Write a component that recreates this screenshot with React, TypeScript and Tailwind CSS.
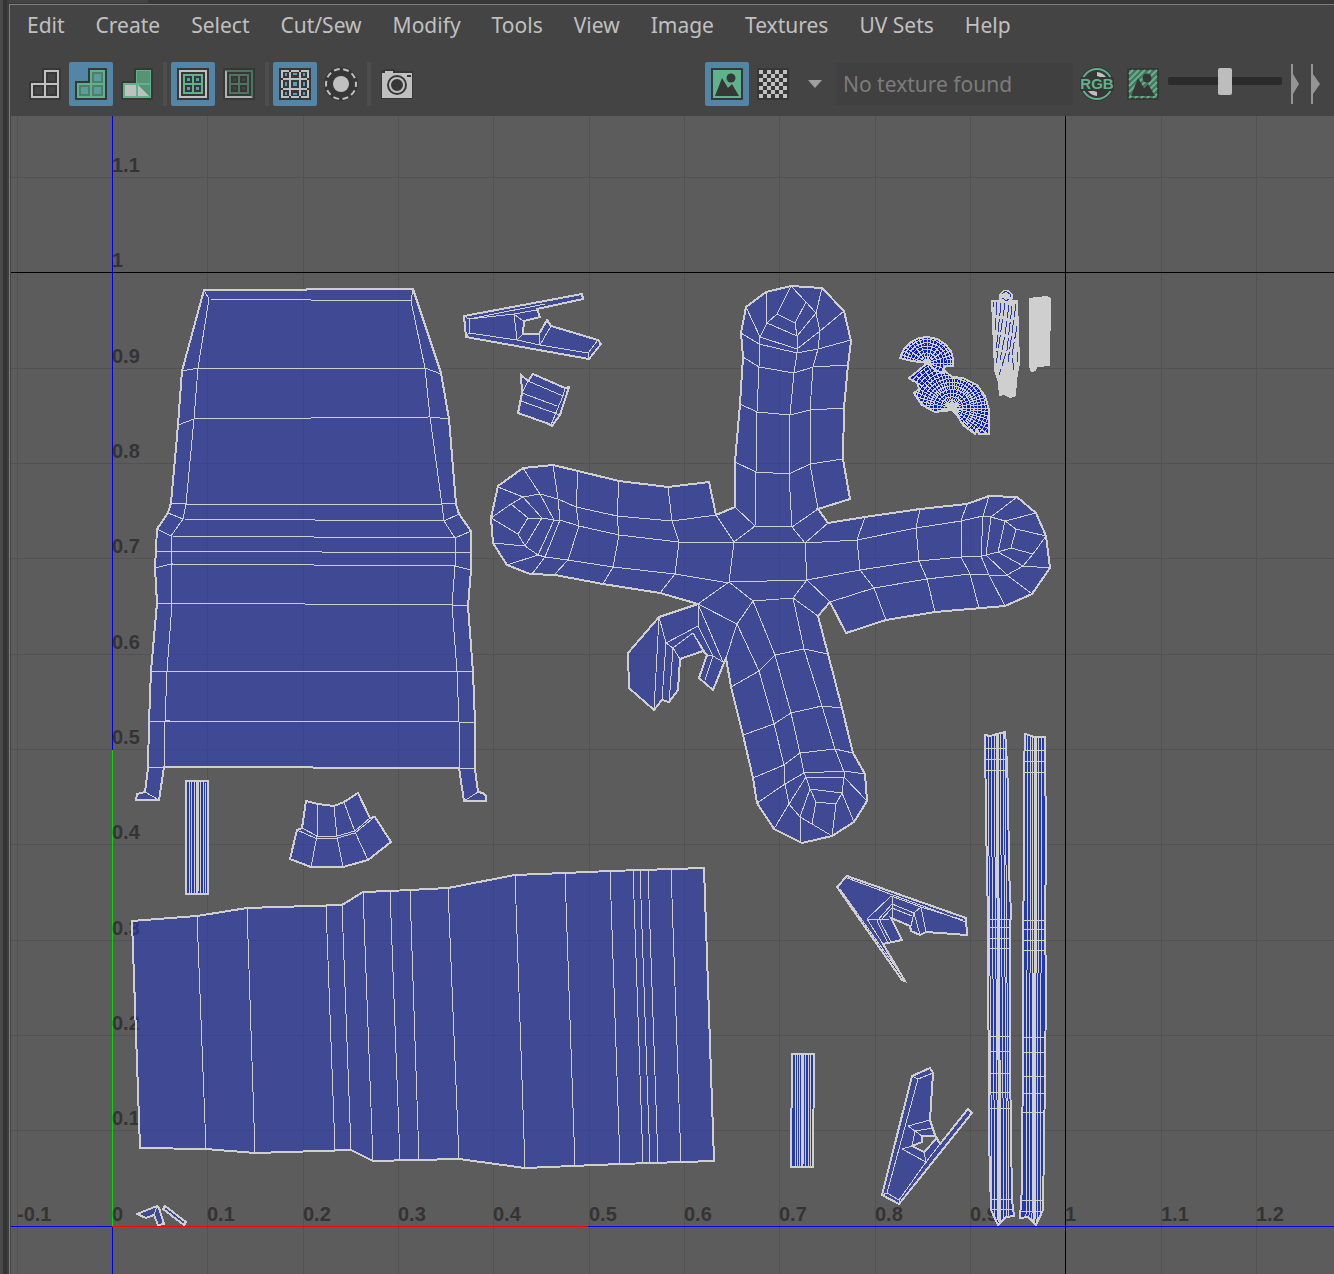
import type { ReactNode } from "react";

const menus = ["Edit", "Create", "Select", "Cut/Sew", "Modify", "Tools", "View", "Image", "Textures", "UV Sets", "Help"];

/* ---------- toolbar ---------- */

function ToolButton({ label, active, children }: { label: string; active?: boolean; children: ReactNode }) {
  return (
    <button
      type="button"
      aria-label={label}
      aria-pressed={!!active}
      className={`flex size-11 shrink-0 items-center justify-center rounded-xs ${active ? "bg-[#5285a6]" : "bg-transparent"}`}
    >
      <svg width="32" height="32" viewBox="0 0 32 32" aria-hidden="true" className="overflow-visible">
        {children}
      </svg>
    </button>
  );
}

function Separator() {
  return <div className="mx-0.5 h-11 w-1 shrink-0 bg-[#4d4d4d]" />;
}

function TilesIcon({ stroke, gap, core }: { stroke: string; gap: string; core: string }) {
  return (
    <>
      <path d="M13 0H32V32H0V13H13Z" fill="#373737" />
      <path d="M15 2H30V30H2V15H15Z" fill={stroke} />
      <path d="M17 4H28V15H17ZM4 17H15V28H4ZM17 17H28V28H17Z" fill={gap} />
      <path d="M19 6H26V13H19ZM6 19H13V26H6ZM19 19H26V26H19Z" fill={core} />
    </>
  );
}

function PictureShape() {
  return (
    <>
      <circle cx="20" cy="10" r="4.5" fill="#373737" />
      <path d="M4 28L11 10L17 20L21 16L28 28Z" fill="#373737" />
    </>
  );
}

function Checker() {
  const cells: ReactNode[] = [];
  for (let r = 0; r < 7; r++)
    for (let c = 0; c < 7; c++)
      if ((r + c) % 2 === 0) cells.push(<rect key={`${r}-${c}`} x={2 + c * 4} y={2 + r * 4} width="4" height="4" fill="#c0c0c0" />);
  return (
    <>
      <rect width="32" height="32" fill="#373737" />
      {cells}
    </>
  );
}

function Toolbar() {
  return (
    <div className="flex items-center gap-0.5 overflow-hidden pt-[15px] pb-2.5 pl-3">
      <ToolButton label="Wireframe">
        <TilesIcon stroke="#c0c0c0" gap="#373737" core="#444444" />
      </ToolButton>
      <ToolButton label="Shaded" active>
        <TilesIcon stroke="#5fb38c" gap="#4f7f69" core="#5d9c9c" />
      </ToolButton>
      <ToolButton label="Distortion">
        <path d="M13 0H32V32H0V13H13Z" fill="#373737" />
        <path d="M15 2H30V30H2V15H15Z" fill="#5fb38c" />
        <path d="M16 3H29V15H16ZM17 17H29V29Z" fill="#569475" />
        <path d="M4 17H15V28H4ZM17 17L28 28H17Z" fill="#c0c0c0" />
      </ToolButton>
      <Separator />
      <ToolButton label="Texture borders" active>
        <rect width="32" height="32" fill="#373737" />
        <rect x="3" y="3" width="26" height="26" fill="none" stroke="#c0c0c0" strokeWidth="2" />
        <path d="M6 6H26V26H6Z" fill="#5fb38c" />
        <path d="M8 8H15V15H8ZM17 8H24V15H17ZM8 17H15V24H8ZM17 17H24V24H17Z" fill="#373737" />
        <path d="M10 10H13V13H10ZM19 10H22V13H19ZM10 19H13V22H10ZM19 19H22V22H19Z" fill="#5a9bc2" />
      </ToolButton>
      <ToolButton label="Grid">
        <rect width="32" height="32" fill="#373737" />
        <path d="M3 3H29V29" fill="none" stroke="#4c7662" strokeWidth="2" />
        <path d="M2 2L4 4V28H28L30 30H2Z" fill="#b0b0b0" />
        <path d="M6 6H26V26H6Z" fill="#4c7662" />
        <path d="M8 8H15V15H8ZM17 8H24V15H17ZM8 17H15V24H8ZM17 17H24V24H17Z" fill="#373737" />
        <path d="M10 10H13V13H10ZM19 10H22V13H19ZM10 19H13V22H10ZM19 19H22V22H19Z" fill="#444444" />
      </ToolButton>
      <Separator />
      <ToolButton label="Pixel snap" active>
        <rect width="32" height="32" fill="#373737" />
        <path d="M2 3H10M12 3H20M22 3H30M2 29H10M12 29H20M22 29H30M3 2V10M3 12V20M3 22V30M29 2V10M29 12V20M29 22V30" stroke="#c0c0c0" strokeWidth="2" />
        <path d="M11 4V28M21 4V28M4 11H28M4 21H28" stroke="#c0c0c0" strokeWidth="2" />
        <path d="M6 5H8V8H6ZM14 5H18V7H14ZM24 5H26V8H24ZM6 14H8V18H6ZM14 14H18V18H14ZM24 14H26V18H24ZM6 24H8V27H6ZM14 25H18V27H14ZM24 24H26V27H24Z" fill="#5a9bc2" />
      </ToolButton>
      <ToolButton label="Isolate select">
        <circle cx="16" cy="16" r="17" fill="#373737" />
        <circle cx="16" cy="16" r="15" fill="none" stroke="#c0c0c0" strokeWidth="2" strokeDasharray="5.85 3.57" strokeDashoffset="2.9" />
        <circle cx="16" cy="16" r="8" fill="#c0c0c0" />
      </ToolButton>
      <Separator />
      <ToolButton label="UV snapshot">
        <path d="M0 2H3V1H14V3H32V31H0Z" fill="#373737" />
        <path d="M1 5H4V3H12V5H31V30H1Z" fill="#c0c0c0" />
        <circle cx="16" cy="17" r="10" fill="#373737" />
        <circle cx="16" cy="17" r="7" fill="none" stroke="#c0c0c0" strokeWidth="2" />
        <rect x="26" y="7" width="4" height="2" fill="#373737" />
      </ToolButton>

      <div className="ml-auto flex items-center gap-0.5">
        <ToolButton label="Display image" active>
          <rect width="32" height="32" fill="#373737" />
          <rect x="2" y="2" width="28" height="28" fill="#5fb38c" />
          <PictureShape />
        </ToolButton>
        <ToolButton label="Checker map">
          <Checker />
        </ToolButton>
        <button type="button" aria-label="Texture list" className="flex h-11 w-9 items-center justify-center">
          <svg width="14" height="8" viewBox="0 0 14 8" aria-hidden="true">
            <path d="M0 0H14L7 8Z" fill="#a0a0a0" />
          </svg>
        </button>
        <input
          aria-label="Texture"
          readOnly
          value="No texture found"
          className="h-[42px] w-[238px] rounded-xs bg-[#404040] px-2 text-[21px] text-[#7c7c7c] outline-none"
        />
        <ToolButton label="RGB channels">
          <circle cx="16" cy="16" r="17" fill="#373737" />
          <circle cx="16" cy="16" r="15" fill="none" stroke="#5fb38c" strokeWidth="2" />
          <path d="M16 4A12 12 0 0 1 25 9H19L16 8ZM16 28A12 12 0 0 1 7 23H13L16 24Z" fill="#c0c0c0" />
          <rect x="-1" y="9" width="34" height="14" fill="#373737" />
          <text x="16" y="21" textAnchor="middle" fontFamily="Liberation Sans, Arial, sans-serif" fontWeight="700" fontSize="15" fill="#5fb38c">
            RGB
          </text>
        </ToolButton>
        <ToolButton label="Dim image">
          <rect width="32" height="32" fill="#373737" />
          <rect x="2" y="2" width="28" height="28" fill="#47735f" />
          <path
            d="M2 6L6 2M2 12L12 2M2 18L18 2M2 24L24 2M2 30L30 2M8 30L30 8M14 30L30 14M20 30L30 20M26 30L30 26"
            stroke="#5fb38c"
            strokeWidth="2"
          />
          <PictureShape />
        </ToolButton>
        <input
          type="range"
          aria-label="Image dim"
          defaultValue={50}
          className="mb-1.5 ml-px w-[114px] appearance-none bg-transparent [&::-webkit-slider-runnable-track]:h-2 [&::-webkit-slider-runnable-track]:rounded-xs [&::-webkit-slider-runnable-track]:bg-[#2b2b2b] [&::-webkit-slider-thumb]:-mt-[9px] [&::-webkit-slider-thumb]:h-[27px] [&::-webkit-slider-thumb]:w-[14px] [&::-webkit-slider-thumb]:appearance-none [&::-webkit-slider-thumb]:rounded-xs [&::-webkit-slider-thumb]:bg-[#bdbdbd]"
        />
        <button type="button" aria-label="Expand toolbar" className="ml-1.5">
          <svg width="44" height="40" viewBox="0 0 44 40" aria-hidden="true">
            <path d="M1 0H3V40H1ZM3 10L9 20L3 30ZM21 0H23V40H21ZM23 10L30 20L23 30Z" fill="#949494" />
          </svg>
        </button>
      </div>
    </div>
  );
}

/* ---------- UV shells ---------- */

type Shell = { outline: string; edges: string };

const shells: Shell[] = [
  {
    outline:
      "M204 290L413 289L441 373L449 419L456 504L459 514L471 531V570L468 606L473 672L475 723V769L478 792L483 793L486 796V801H464L459 768L164 767L159 800H136L137 794L145 792L148 768L149 722L151 671L157 603L155 568L157 529L168 513L171 503L178 425L182 371Z",
    edges:
      "M204 290L209 299L198 368L194 419L186 504L183 519L171 536V564L172 604L167 671L165 722L164 767M413 289L411 301L425 368L430 417L442 505L444 521L455 538V566L452 605L457 671L459 722V768M209 299L411 301M182 371L198 368H425L441 374M178 425L194 419L430 417L449 419M171 503L186 504H442L456 503M168 513L183 519L444 521L459 514M157 529L171 536L455 538L471 531M155 551H171L471 553M155 568L171 564L455 566L471 570M157 603L452 605L468 606M151 671H457L473 672M149 722L165 721L459 722L475 723M148 768L164 767M459 768L475 769M145 792L159 800M478 792L464 801",
  },
  {
    outline: "M306 801L318 804L334 806L344 802L358 793L370 818L375 817L391 842L368 860L343 867H311L290 859L297 830L302 828Z",
    edges: "M302 828L317 836H337L355 831L370 818M297 830L315 838H337L355 833L372 819M318 804L317 836L311 867M334 806L337 837L343 867M344 802L355 832L368 860",
  },
  {
    outline:
      "M132 921L197 916L247 908L342 905L363 892L390 891L448 888L515 875L565 873L610 871L704 868L714 1161L620 1164L525 1168L459 1159L373 1161L351 1150L255 1153L206 1149L140 1148Z",
    edges:
      "M197 916L206 1149M247 908L255 1153M326 906L335 1150M342 905L351 1150M363 892L373 1161M390 891L400 1160M410 891L419 1160M448 888L459 1159M515 875L525 1168M565 873L575 1166M610 871L620 1164M633 870L643 1163M640 870L650 1163M648 870L658 1163M671 869L681 1162",
  },
  {
    outline: "M464 316L582 294L583 299L537 309L540 317L524 321L523 334H539L547 320L551 326L598 340L601 344L589 359L466 337Z",
    edges: "M464 316L469 319V333L466 337M469 319L514 314L537 310M469 319L545 304M469 333L517 340L540 345L588 353L598 340M514 314L517 340L523 334M514 314L523 321M539 334L540 345L551 326M588 353V359",
  },
  {
    outline: "M521 375L528 381L533 374L565 388L569 387L560 415L552 426L549 424L518 413L522 393Z",
    edges: "M528 381L522 393M528 381L563 396M522 393L557 406M521 401L560 415M565 388L563 396L557 410L551 425",
  },
  {
    outline:
      "M735 507V462L740 404L743 357L741 333L746 307L766 292L791 286L822 288L844 311L851 341L848 365L844 408L843 459L850 499L818 509L828 523L865 517L920 509L967 504L989 496L1017 497L1036 513L1046 536L1050 568L1032 594L1005 606L935 612L886 620L846 633L830 602L818 616L828 654L842 708L853 753L865 774L867 801L854 822L832 836L802 843L774 829L757 803L753 778L743 735L731 687L726 658L713 690L699 678L707 655L703 651L680 659L678 690L669 702L662 700L654 710L629 688L628 653L659 617L698 604L660 593L603 584L555 575L530 574L507 565L493 543L491 518L498 486L523 468L553 465L578 471L619 481L668 487L709 482L716 515Z",
    edges: [
      // upper limb
      "M766 292L767 323M746 307L760 337L759 367L757 412L756 472L755 526M791 286L777 314L767 323L760 337M777 314L795 323L797 336V353L794 373L790 415L789 474L792 527M795 323L806 302M791 286L806 302L816 313M822 288L816 313L820 331L818 349L813 367L810 410V464L818 509M767 323L797 336L816 313M760 337L797 349L820 331L844 311M741 333L759 344L797 353L818 349L851 340M743 357L759 367L794 373L813 367L848 365M740 404L757 412L790 415L810 410L844 408M735 462L756 472L789 474L810 464L843 459",
      // centre
      "M735 507L755 526L792 527L818 509M755 526L734 542M716 515L734 542L729 582M792 527L805 543L828 523M805 543L807 580M729 582L807 580L830 602M807 580L793 598L818 616M729 582L753 601L793 598M729 582L698 604L737 624L753 601M737 624L726 658",
      // right limb
      "M679 542H734L805 543L857 540L916 528L961 521L983 516L991 517L1017 497M991 517L1005 521L1036 513M807 580L860 570L919 561L961 557L981 556L986 555L998 552L1011 548L1033 554L1046 536M830 602L874 588L927 579L970 574L989 575H1007L1023 566L1050 568M865 517L857 540L860 570L874 588L886 620M920 509L916 528L919 561L927 579L935 612M967 504L961 521V557L970 574L979 608M989 496L983 516L981 556L989 575L1005 606M991 517L986 555L1007 575L1032 594M1005 521L998 552L1023 566L1033 554M1005 521L1016 529L1046 536M1016 529L1011 548",
      // lower limb
      "M753 601L775 655L791 713L800 753L804 773L806 777M737 624L759 671L774 724L784 765L785 784L789 804M793 598L804 649L822 706L835 749L844 772M731 687L759 671L775 655L804 649L828 654M743 735L774 724L791 713L822 706L842 708M753 778L784 765L800 753L835 749L853 753M757 803L785 784L804 773L844 771L865 774M806 777H844L867 801M844 772V777L842 793L854 822M806 777L810 789L842 793M806 777L789 804L774 829M789 804L800 817L812 824L832 836M800 817L801 843M810 789L800 817M810 789L816 802L836 804L832 836M816 802L812 824M842 793L836 804",
      // left limb
      "M498 487L523 497M491 518L511 504L523 497L540 494L558 499L576 507L617 516L672 521L716 515M528 518H542L554 520H560L579 526L619 535L679 542M491 518L518 534L525 546L538 555L545 557L568 560L613 567L675 574L729 583M523 468L540 494L554 520L538 555L507 565M553 465L558 499L560 520L545 557L532 574M578 471L576 507L579 526L568 560L555 574M619 481L617 516L619 535L613 567L603 584M668 487L672 521L679 542L675 574L660 593M523 497L542 518L525 546L493 543M511 504L528 518L518 534",
      // hook
      "M659 617L654 710M659 617L666 643L662 700M666 643L673 648L670 690L669 702M673 648L680 659M666 643L698 626V604M673 648L693 633L703 651M693 633L707 655L713 656L705 680M698 604L723 662M698 626L713 656L723 662",
    ].join(""),
  },
  {
    outline: "M847 876L966 918L967 935L926 932L920 935L911 931L910 926L891 918L902 940L883 944L905 981L902 980L837 887Z",
    edges:
      "M847 878L966 922M867 919L891 896L921 907L963 920M867 919H889M877 921L892 904L914 913L911 926M880 921L892 908L912 916M892 896V918M921 907L926 932M921 907L914 913L920 935M877 921L888 943M880 921L891 942M867 919L883 944M840 889L902 976",
  },
  {
    outline:
      "M912 1076L930 1068L933 1073L930 1120L935 1135L940 1144L968 1109L972 1113L899 1204L882 1195ZM922 1136L935 1136L937 1138L924 1152L912 1146L922 1142Z",
    edges:
      "M912 1076L918 1079L887 1193L899 1200L926 1162L940 1144M918 1079L933 1073M908 1126L930 1120M915 1131L933 1128M908 1126L915 1131L922 1136M915 1131L912 1146L902 1149L926 1162L924 1152M899 1200V1204M887 1193L882 1195",
  },
  {
    outline: "M137 1214L157 1206L159 1208L164 1224L158 1225L154 1215L146 1218Z",
    edges: "M157 1206L154 1215",
  },
  { outline: "M165 1206L186 1222L184 1225L163 1209Z", edges: "" },
];

const spiral = {
  upper: "M900 358L904 349L911 342L919 338L928 337L937 339L945 344L951 351L953 359V366H945L943 373L935 370L928 363L912 361Z",
  lower:
    "M909 378L919 370L926 364L936 366L945 371L952 377L963 378L977 385L985 396L989 410V434H979L977 429L975 434L963 425L957 415L952 410L935 412L922 405L914 393L919 389L917 382L913 381Z",
};

function RadialMesh({ id, outline, cx, cy, radius, spokes, rings }: { id: string; outline: string; cx: number; cy: number; radius: number; spokes: number; rings: number }) {
  let rays = "";
  for (let i = 0; i < spokes; i++) {
    const a = (i / spokes) * Math.PI * 2;
    const inner = i % 2 ? 18 : 4;
    rays += `M${cx + Math.cos(a) * inner} ${cy + Math.sin(a) * inner}L${cx + Math.cos(a) * radius} ${cy + Math.sin(a) * radius}`;
  }
  return (
    <>
      <clipPath id={id}>
        <path d={outline} />
      </clipPath>
      <path d={outline} fill="#0a20c4" />
      <g clipPath={`url(#${id})`} fill="none" stroke="#cfcfcf">
        <path d={rays} />
        {Array.from({ length: rings }, (_, i) => (
          <circle key={i} cx={cx} cy={cy} r={((i + 1) * radius) / rings} />
        ))}
        <circle cx={cx} cy={cy} r="3" fill="#cfcfcf" />
      </g>
      <path d={outline} fill="none" stroke="#cfcfcf" strokeWidth="2" />
    </>
  );
}

type Strip = { id: string; outline: string; lines: string; core: string; rows: number[] };

const strips: Strip[] = [
  {
    id: "strip-a",
    outline:
      "M985 735L990 736L1005 732L1006 745L1008 788L1009 870L1011 913L1010 927V1065L1012 1200L1014 1216L1006 1217L998 1225L991 1210L989 1137L988 920L986 820Z",
    lines: "M988 734L992 1215M991 734L995 1220M1000 732L1004 1218M1003 732L1007 1218M1005 745L1009 1218M994 734L998 1220",
    core: "M997 733L1000 1222",
    rows: [748, 759, 770, 919, 927, 938, 948, 1036, 1051, 1073, 1092, 1108, 1199, 1209],
  },
  {
    id: "strip-b",
    outline:
      "M1025 734L1035 737H1045L1046 853L1045 920L1046 987L1045 1077L1043 1210L1036 1225L1028 1217L1020 1218L1022 1187L1023 1030V933L1024 870V770Z",
    lines: "M1028 735L1026 1217M1031 735L1029 1218M1033 735L1032 1220M1039 737L1037 1222M1042 737L1040 1220",
    core: "M1036 737L1034 1222",
    rows: [750, 761, 772, 920, 929, 940, 950, 1037, 1052, 1076, 1093, 1112, 1200, 1211],
  },
  { id: "strip-c", outline: "M186 781H208V894H186Z", lines: "M189 781V894M191 781V894M194 781V894M200 781V894M203 781V894M205 781L206 894", core: "M198 781L197 894", rows: [] },
  { id: "strip-d", outline: "M792 1054H814L813 1167H791Z", lines: "M795 1054V1167M797 1054V1167M800 1054L799 1167M805 1054V1167M808 1054V1167M811 1054L810 1167", core: "M803 1054L802 1167", rows: [] },
];

/* ---------- viewport ---------- */

const ORIGIN_X = 112;
const ORIGIN_Y = 1226;
const UNIT = 953.3;

const tickX = (i: number) => Math.round(ORIGIN_X + (i * UNIT) / 10);
const tickY = (i: number) => Math.round(ORIGIN_Y - (i * UNIT) / 10 - 0.3);
const tickLabel = (i: number) => String(i / 10);

function Viewport() {
  const xs = Array.from({ length: 14 }, (_, i) => i - 1);
  const ys = Array.from({ length: 11 }, (_, i) => i + 1);
  return (
    <svg viewBox="11 116 1323 1158" className="block w-full bg-[#5c5c5c]" role="img" aria-label="UV layout" shapeRendering="crispEdges">
      <g fill="#525252">
        {xs.map((i) => (
          <rect key={i} x={tickX(i)} y="116" width="1" height="1158" />
        ))}
        {ys.map((i) => (
          <rect key={i} x="11" y={tickY(i)} width="1323" height="1" />
        ))}
      </g>
      <rect x={tickX(10)} y="116" width="1" height="1158" fill="#000000" />
      <rect x="11" y="272" width="1323" height="1" fill="#000000" />
      <rect x="11" y="1226" width="1323" height="1" fill="#0000e6" />
      <rect x="112" y="116" width="1" height="1158" fill="#0000e6" />
      <rect x="112" y="1226" width="476" height="1" fill="#ff0000" />
      <rect x="112" y="750" width="1" height="476" fill="#00dc00" />

      <g fill="#343434" fontFamily="Liberation Sans, Arial, sans-serif" fontWeight="700" fontSize="20">
        {xs.map((i) => (
          <text key={i} x={tickX(i)} y="1221">
            {tickLabel(i)}
          </text>
        ))}
        {ys.map((i) => (
          <text key={i} x="112" y={tickY(i) - 5}>
            {tickLabel(i)}
          </text>
        ))}
      </g>

      <g>
        {shells.map((s) => (
          <g key={s.outline} stroke="#cfcfcf">
            <path d={s.outline} fill="#2438cc" fillOpacity="0.5" fillRule="evenodd" strokeWidth="2" />
            <path d={s.edges} fill="none" strokeWidth="1" />
          </g>
        ))}

        {strips.map((s) => (
          <g key={s.id} stroke="#cfcfcf" fill="none">
            <clipPath id={s.id}>
              <path d={s.outline} />
            </clipPath>
            <path d={s.outline} fill="#2438b0" stroke="none" />
            <g clipPath={`url(#${s.id})`}>
              <path d={s.lines} />
              <path d={s.core} strokeWidth="3" />
              <path d={s.rows.map((y) => `M980 ${y}H1050`).join("")} />
            </g>
            <path d={s.outline} strokeWidth="2" />
          </g>
        ))}

        <RadialMesh id="spiral-lower" outline={spiral.lower} cx={952} cy={408} radius={48} spokes={60} rings={13} />
        <RadialMesh id="spiral-upper" outline={spiral.upper} cx={927} cy={363} radius={27} spokes={40} rings={8} />

        <circle cx="1006" cy="297" r="7" fill="#cfcfcf" />
        <path d="M991 300L1018 300L1020 363L1017 380L1016 396L1010 398L1004 395L999 396L998 383L994 370Z" fill="#cfcfcf" />
        <path
          d="M993 302V307M997 302L995 330M1001 303L996 352M1005 303L1001 330L996 365M1009 305L1005 335L1000 360M1012 306L1007 350L999 375M1016 304L1011 340L1008 362M1017 326L1012 355L1014 370M1017 352V362M1002 294L1006 291L1011 295L1007 301L1002 298"
          fill="none"
          stroke="#2438b0"
          strokeDasharray="13 3"
        />
        <path d="M1029 298L1037 297L1047 296L1051 298L1050 366L1037 367L1036 371L1031 372L1029 367Z" fill="#cfcfcf" />
      </g>
    </svg>
  );
}

export default function App() {
  return (
    <div className="flex min-h-screen w-full overflow-hidden bg-[#444444] font-['Noto_Sans',sans-serif]">
      <div className="w-[9px] shrink-0 border-r-2 border-l-[3px] border-r-[#3e3e3e] border-l-[#4a4a4a] bg-[#333333]" />
      <div className="min-w-0 flex-1">
        <div className="h-1 bg-[#373737]">
          <div className="h-[3px] w-[139px] bg-[#444444]" />
        </div>
        <main className="border-t border-l border-[#7f7f7f] pl-px">
          <nav aria-label="Main menu" className="flex h-[42px] items-center gap-[31px] pl-4 text-[21px] whitespace-nowrap text-[#c0c0c0]">
            {menus.map((m) => (
              <button key={m} type="button">
                {m}
              </button>
            ))}
          </nav>
          <Toolbar />
          <Viewport />
        </main>
      </div>
    </div>
  );
}
